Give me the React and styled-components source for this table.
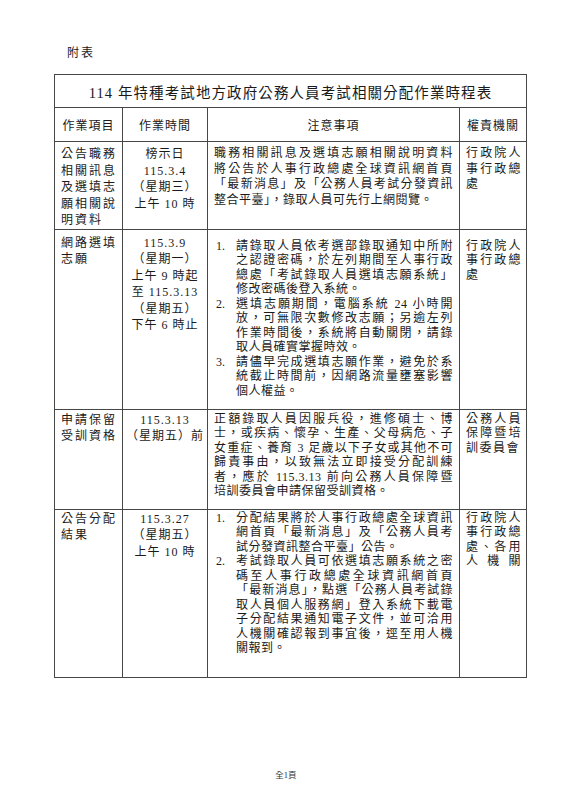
import React from 'react';
import styled, { createGlobalStyle } from 'styled-components';

const GlobalStyle = createGlobalStyle`
  html, body {
    margin: 0;
    background: #fff;
  }
  body {
    font-family: "Liberation Serif", "Noto Sans CJK TC", serif;
    color: #1a1a1a;
  }
`;

const rows = [
  {
    h: 86,
    pad: 4,
    item: ['公告職務', '相關訊息', '及選填志', '願相關說', '明資料'],
    time: ['榜示日', '115.3.4', '（星期三）', '上午 10 時'],
    text: [
      '職務相關訊息及選填志願相關說明資料',
      '將公告於人事行政總處全球資訊網首頁',
      '「最新消息」及「公務人員考試分發資訊',
      '整合平臺」，錄取人員可先行上網閱覽。',
    ],
    org: ['行政院人', '事行政總', '處'],
  },
  {
    h: 180,
    pad: 5,
    listPad: 9,
    item: ['網路選填', '志願'],
    time: ['115.3.9', '（星期一）', '上午 9 時起', '至 115.3.13', '（星期五）', '下午 6 時止'],
    list: [
      ['請錄取人員依考選部錄取通知中所附', '之認證密碼，於左列期間至人事行政', '總處「考試錄取人員選填志願系統」', '修改密碼後登入系統。'],
      ['選填志願期間，電腦系統 24 小時開', '放，可無限次數修改志願；另逾左列', '作業時間後，系統將自動關閉，請錄', '取人員確實掌握時效。'],
      ['請儘早完成選填志願作業，避免於系', '統截止時間前，因網路流量壅塞影響', '個人權益。'],
    ],
    org: ['行政院人', '事行政總', '處'],
  },
  {
    h: 100,
    pad: 2,
    item: ['申請保留', '受訓資格'],
    time: ['115.3.13', '（星期五）前'],
    text: [
      '正額錄取人員因服兵役，進修碩士、博',
      '士，或疾病、懷孕、生產、父母病危、子',
      '女重症、養育 3 足歲以下子女或其他不可',
      '歸責事由，以致無法立即接受分配訓練',
      '者，應於 115.3.13 前向公務人員保障暨',
      '培訓委員會申請保留受訓資格。',
    ],
    org: ['公務人員', '保障暨培', '訓委員會'],
  },
  {
    h: 168,
    pad: 1,
    listPad: 1,
    item: ['公告分配', '結果'],
    time: ['115.3.27', '（星期五）', '上午 10 時'],
    list: [
      ['分配結果將於人事行政總處全球資訊', '網首頁「最新消息」及「公務人員考', '試分發資訊整合平臺」公告。'],
      ['考試錄取人員可依選填志願系統之密', '碼至人事行政總處全球資訊網首頁', '「最新消息」，點選「公務人員考試錄', '取人員個人服務網」登入系統下載電', '子分配結果通知電子文件，並可洽用', '人機關確認報到事宜後，逕至用人機', '關報到。'],
    ],
    org: ['行政院人', '事行政總', '處、各用', '人機關'],
    orgFill: true,
  },
];

const Page = styled.div`
  width: 566px;
  height: 800px;
  box-sizing: border-box;
  padding: 45px 0 19px;
  display: flex;
  flex-direction: column;
`;

const Caption = styled.div`
  margin-left: 67px;
  font-size: 12px;
  line-height: 16px;
  letter-spacing: 2px;
`;

const Sheet = styled.table`
  margin: 13px 0 0 54px;
  width: 472px;
  border-collapse: collapse;
  table-layout: fixed;
  font-size: 12px;
`;

const Cell = styled.td`
  border: 1px solid #474747;
  padding: 0;
  vertical-align: top;
  box-sizing: border-box;
`;

const TitleCell = styled(Cell)`
  height: 33px;
  vertical-align: middle;
  text-align: center;
  font-size: 14.5px;
  letter-spacing: 1.1px;
`;

const HeadCell = styled(Cell)`
  height: 34px;
  vertical-align: middle;
  text-align: center;
  letter-spacing: 1px;
`;

const ItemCell = styled(Cell)`
  padding: ${p => p.$pt}px 7px 0 6px;
  line-height: 16.5px;
  letter-spacing: 2px;
`;

const TimeCell = styled(Cell)`
  padding: ${p => p.$pt}px 2px 0;
  line-height: 16.5px;
  letter-spacing: 1px;
  text-align: center;
`;

const NoteCell = styled(Cell)`
  padding: ${p => p.$pt}px 6px 0 6px;
  line-height: ${p => p.$lh}px;
  letter-spacing: 0.5px;
`;

const OrgCell = styled(Cell)`
  padding: ${p => p.$pt}px 4px 0 6px;
  line-height: ${p => p.$lh}px;
  letter-spacing: 1.5px;
`;

const Line = styled.div`
  white-space: nowrap;
  text-align: left;
  text-align-last: ${p => (p.$full ? 'justify' : 'auto')};
`;

const List = styled.ol`
  margin: 0;
  padding: 0;
  list-style: none;
`;

const Entry = styled.li`
  display: grid;
  grid-template-columns: 22px 1fr;
`;

const Mark = styled.span`
  padding-left: 2px;
  letter-spacing: 0;
`;

const Footer = styled.div`
  margin-top: auto;
  padding-left: 6px;
  text-align: center;
  font-size: 8.5px;
  line-height: 12px;
  color: #333;
`;

function Lines({ lines, fillLast }) {
  return lines.map((l, i) => (
    <Line key={i} $full={i < lines.length - 1 || fillLast}>
      {l}
    </Line>
  ));
}

export default function App() {
  return (
    <>
      <GlobalStyle />
      <Page>
        <Caption>附表</Caption>
        <Sheet>
          <colgroup>
            <col style={{ width: 68 }} />
            <col style={{ width: 85 }} />
            <col style={{ width: 252 }} />
            <col style={{ width: 67 }} />
          </colgroup>
          <tbody>
            <tr>
              <TitleCell colSpan={4}>114 年特種考試地方政府公務人員考試相關分配作業時程表</TitleCell>
            </tr>
            <tr>
              <HeadCell>作業項目</HeadCell>
              <HeadCell>作業時間</HeadCell>
              <HeadCell>注意事項</HeadCell>
              <HeadCell>權責機關</HeadCell>
            </tr>
            {rows.map((r, i) => {
              const notePad = r.list ? r.listPad : r.pad;
              const lh = i === 0 ? 15.5 : 14.5;
              return (
                <tr key={i} style={{ height: r.h }}>
                  <ItemCell $pt={r.pad}>
                    <Lines lines={r.item} />
                  </ItemCell>
                  <TimeCell $pt={r.pad}>
                    {r.time.map((t, j) => (
                      <div key={j}>{t}</div>
                    ))}
                  </TimeCell>
                  <NoteCell $pt={notePad} $lh={lh}>
                    {r.list ? (
                      <List>
                        {r.list.map((item, j) => (
                          <Entry key={j}>
                            <Mark>{j + 1}.</Mark>
                            <div>
                              <Lines lines={item} />
                            </div>
                          </Entry>
                        ))}
                      </List>
                    ) : (
                      <Lines lines={r.text} />
                    )}
                  </NoteCell>
                  <OrgCell $pt={notePad} $lh={lh}>
                    <Lines lines={r.org} fillLast={r.orgFill} />
                  </OrgCell>
                </tr>
              );
            })}
          </tbody>
        </Sheet>
        <Footer>全1頁</Footer>
      </Page>
    </>
  );
}
